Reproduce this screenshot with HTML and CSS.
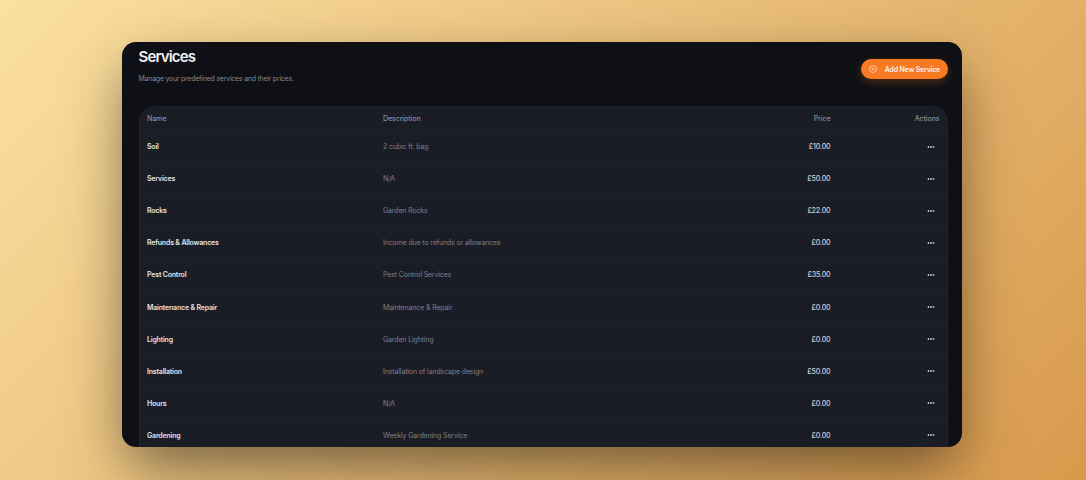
FILE: index.html
```
<!DOCTYPE html>
<html lang="en">
<head>
<meta charset="utf-8">
<title>Services</title>
<link rel="stylesheet" href="styles.css">
</head>
<body>
<main class="window">
  <header class="page-header">
    <div>
      <h1 class="title">Services</h1>
      <p class="subtitle">Manage your predefined services and their prices.</p>
    </div>
    <button class="add-button" type="button">
      <svg class="add-icon" viewBox="0 0 24 24"><circle cx="12" cy="12" r="10.5"/><path d="M8 12h8M12 8v8"/></svg>
      <span>Add New Service</span>
    </button>
  </header>
  <section class="table" id="services">
    <div class="row head"><span>Name</span><span>Description</span><span class="right">Price</span><span class="right">Actions</span></div>
    <div class="row"><span class="name">Soil</span><span class="desc">2 cubic ft. bag</span><span class="price">£10.00</span><svg class="more" viewBox="0 0 8 4"><circle cx="1.5" cy="2" r=".9"/><circle cx="4" cy="2" r=".9"/><circle cx="6.5" cy="2" r=".9"/></svg></div>
    <div class="row"><span class="name">Services</span><span class="desc">N/A</span><span class="price">£50.00</span><svg class="more" viewBox="0 0 8 4"><circle cx="1.5" cy="2" r=".9"/><circle cx="4" cy="2" r=".9"/><circle cx="6.5" cy="2" r=".9"/></svg></div>
    <div class="row"><span class="name">Rocks</span><span class="desc">Garden Rocks</span><span class="price">£22.00</span><svg class="more" viewBox="0 0 8 4"><circle cx="1.5" cy="2" r=".9"/><circle cx="4" cy="2" r=".9"/><circle cx="6.5" cy="2" r=".9"/></svg></div>
    <div class="row"><span class="name">Refunds &amp; Allowances</span><span class="desc">Income due to refunds or allowances</span><span class="price">£0.00</span><svg class="more" viewBox="0 0 8 4"><circle cx="1.5" cy="2" r=".9"/><circle cx="4" cy="2" r=".9"/><circle cx="6.5" cy="2" r=".9"/></svg></div>
    <div class="row"><span class="name">Pest Control</span><span class="desc">Pest Control Services</span><span class="price">£35.00</span><svg class="more" viewBox="0 0 8 4"><circle cx="1.5" cy="2" r=".9"/><circle cx="4" cy="2" r=".9"/><circle cx="6.5" cy="2" r=".9"/></svg></div>
    <div class="row"><span class="name">Maintenance &amp; Repair</span><span class="desc">Maintenance &amp; Repair</span><span class="price">£0.00</span><svg class="more" viewBox="0 0 8 4"><circle cx="1.5" cy="2" r=".9"/><circle cx="4" cy="2" r=".9"/><circle cx="6.5" cy="2" r=".9"/></svg></div>
    <div class="row"><span class="name">Lighting</span><span class="desc">Garden Lighting</span><span class="price">£0.00</span><svg class="more" viewBox="0 0 8 4"><circle cx="1.5" cy="2" r=".9"/><circle cx="4" cy="2" r=".9"/><circle cx="6.5" cy="2" r=".9"/></svg></div>
    <div class="row"><span class="name">Installation</span><span class="desc">Installation of landscape design</span><span class="price">£50.00</span><svg class="more" viewBox="0 0 8 4"><circle cx="1.5" cy="2" r=".9"/><circle cx="4" cy="2" r=".9"/><circle cx="6.5" cy="2" r=".9"/></svg></div>
    <div class="row"><span class="name">Hours</span><span class="desc">N/A</span><span class="price">£0.00</span><svg class="more" viewBox="0 0 8 4"><circle cx="1.5" cy="2" r=".9"/><circle cx="4" cy="2" r=".9"/><circle cx="6.5" cy="2" r=".9"/></svg></div>
    <div class="row"><span class="name">Gardening</span><span class="desc">Weekly Gardening Service</span><span class="price">£0.00</span><svg class="more" viewBox="0 0 8 4"><circle cx="1.5" cy="2" r=".9"/><circle cx="4" cy="2" r=".9"/><circle cx="6.5" cy="2" r=".9"/></svg></div>
  </section>
</main>
</body>
</html>
```
FILE: styles.css
```
* { box-sizing: border-box; }

body {
  margin: 0;
  height: 480px;
  overflow: hidden;
  padding: 42px 124px 33px 122px;
  background: linear-gradient(135deg, #fbe0a1 0%, #e5b670 60%, #d8994c 100%);
  font-family: Inter, "Liberation Sans", sans-serif;
}

.window {
  height: 405px;
  overflow: hidden;
  padding: 0 14px 0 16.5px;
  border-radius: 14px;
  background: #0f1015;
  box-shadow: 0 24px 60px -6px rgba(0, 0, 0, .52);
}

.page-header {
  display: flex;
  justify-content: space-between;
  height: 64px;
}

.title {
  margin: 5px 0 0;
  font-size: 15px;
  font-weight: 600;
  line-height: 20px;
  letter-spacing: -.85px;
  color: #f0f0f2;
}

.subtitle {
  margin: 7px 0 0;
  font-size: 7px;
  line-height: 10px;
  letter-spacing: -.24px;
  color: #85858e;
}

.add-button {
  display: flex;
  align-items: center;
  justify-content: space-between;
  width: 87px;
  height: 20px;
  margin-top: 17px;
  padding: 0 8px;
  border: 0;
  border-radius: 10px;
  background: #f87a22;
  box-shadow: 0 3px 8px rgba(249, 115, 22, .28);
  color: #fff2e8;
  font: 600 7px/10px Inter, "Liberation Sans", sans-serif;
  letter-spacing: -.2px;
  white-space: nowrap;
}

.add-button span { padding-top: 1px; }

.add-icon {
  width: 8px;
  height: 8px;
  overflow: visible;
  fill: none;
  stroke: #ffe4cd;
  stroke-width: 2;
  stroke-linecap: round;
}

.table {
  border: 1px solid #20222c;
  border-radius: 16px 16px 0 0;
  background: #1b1d26;
}

.row {
  display: grid;
  grid-template-columns: 236px 347.5px 100px 109px;
  align-items: center;
  height: 32.1px;
  padding: 1px 7.5px 0;
  border-bottom: 1px solid #20222d;
  font-size: 7px;
  line-height: 10px;
  letter-spacing: -.14px;
  white-space: nowrap;
}

.head {
  height: 24px;
  padding-top: 0;
  color: #8c8c98;
  font-weight: 500;
  letter-spacing: -.08px;
}

.right { text-align: right; }

.name {
  font-weight: 600;
  letter-spacing: -.19px;
  color: #e2e2e6;
}

.desc { color: #7d7e89; }

.price {
  text-align: right;
  font-weight: 500;
  letter-spacing: -.14px;
  color: #d2d2d8;
}

.more {
  width: 8px;
  height: 4px;
  margin: 0 4.6px 1px 0;
  justify-self: end;
  fill: #c5c5cc;
}
```
